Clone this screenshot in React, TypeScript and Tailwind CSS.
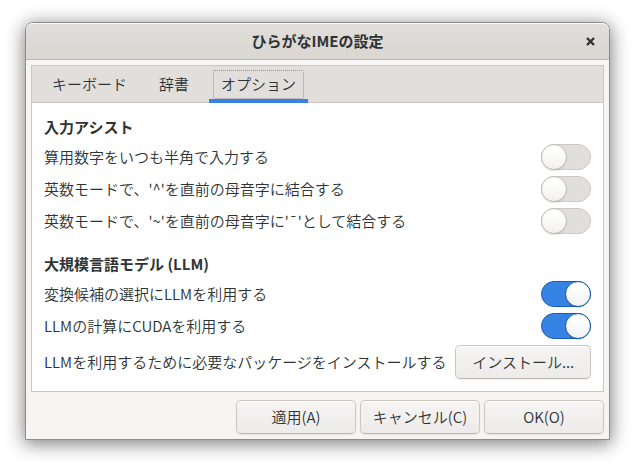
import { useState, type ReactNode } from "react";

const tabs = ["キーボード", "辞書", "オプション"];

function Switch({ id, defaultChecked }: { id: string; defaultChecked?: boolean }) {
  return (
    <input
      id={id}
      type="checkbox"
      role="switch"
      defaultChecked={defaultChecked}
      className="flex h-[26px] w-[50px] shrink-0 appearance-none rounded-full border border-[#cdc7c2] bg-[#e1dedb] before:-m-px before:size-[26px] before:rounded-full before:border before:border-[#c4bdb6] before:bg-linear-to-b before:from-white before:from-20% before:to-[#f2f1f0] before:shadow-[0_1px_1px_rgba(0,0,0,0.12)] before:content-[''] checked:justify-end checked:border-[#185fb4] checked:bg-[#3584e4] checked:before:border-[#185fb4]"
    />
  );
}

function SwitchRow({ id, label, on }: { id: string; label: string; on?: boolean }) {
  return (
    <div className="flex items-center justify-between">
      <label htmlFor={id} className="whitespace-nowrap">
        {label}
      </label>
      <Switch id={id} defaultChecked={on} />
    </div>
  );
}

function Button({ children, wide }: { children: ReactNode; wide?: boolean }) {
  return (
    <button
      type="button"
      className={`h-[34px] shrink-0 whitespace-nowrap rounded-[5px] border border-[#cdc7c2] border-b-[#bfb8b1] bg-linear-to-b from-[#f6f5f4] to-[#edebe9] shadow-[inset_0_1px_rgba(255,255,255,0.8),0_1px_2px_rgba(0,0,0,0.07)] ${wide ? "px-4" : "w-[120px]"}`}
    >
      {children}
    </button>
  );
}

export default function App() {
  const [active, setActive] = useState(2);
  return (
    <div className="bg-white px-[25px] pt-[22px] pb-7 font-['Noto_Sans_CJK_JP',sans-serif] text-[15px] leading-[22px] font-[350] text-[#2e3436]">
      <div className="rounded-t-lg border border-[#8c8c8b] bg-[#f6f5f4] shadow-[0_3px_18px_1px_rgba(0,0,0,0.5)]">
        <header className="grid h-[37px] grid-cols-[1fr_auto_1fr] items-center rounded-t-[7px] border-b border-[#bfb8b1] bg-linear-to-b from-[#e1dedb] to-[#dad6d2] shadow-[inset_0_1px_rgba(255,255,255,0.8)]">
          <h1 className="col-start-2 font-bold">ひらがなIMEの設定</h1>
          <button type="button" aria-label="閉じる" className="mr-[14px] justify-self-end">
            <svg viewBox="0 0 9 9" className="size-[9px]" fill="none" stroke="#2e3436" strokeWidth="2.4">
              <path d="M1 1 8 8M8 1 1 8" />
            </svg>
          </button>
        </header>

        <main className="flex flex-col gap-2 p-[5px]">
          <div className="border border-[#cdc7c2] bg-white">
            <div role="tablist" className="flex h-[37px] gap-2 bg-[#e1dedb] px-2 shadow-[inset_0_-1px_#cdc7c2]">
              {tabs.map((name, i) => (
                <button
                  key={name}
                  type="button"
                  role="tab"
                  aria-selected={i === active}
                  onClick={() => setActive(i)}
                  className={`border-b-4 px-1 pt-1 ${i === active ? "border-[#3584e4]" : "border-transparent"}`}
                >
                  <span
                    className={`flex h-[29px] items-center rounded-xs border border-dotted px-[7px] pb-0.5 ${i === active ? "border-[#969593]" : "border-transparent"}`}
                  >
                    {name}
                  </span>
                </button>
              ))}
            </div>

            <div role="tabpanel" className="flex flex-col gap-[6px] p-3">
              <h2 className="pt-px font-bold">入力アシスト</h2>
              <SwitchRow id="digits" label="算用数字をいつも半角で入力する" />
              <SwitchRow id="circumflex" label="英数モードで、'^'を直前の母音字に結合する" />
              <SwitchRow id="macron" label="英数モードで、'~'を直前の母音字に'¯'として結合する" />
              <h2 className="mt-3 pt-px font-bold">大規模言語モデル (LLM)</h2>
              <SwitchRow id="llm" label="変換候補の選択にLLMを利用する" on />
              <SwitchRow id="cuda" label="LLMの計算にCUDAを利用する" on />
              <div className="flex items-center justify-between">
                <span className="whitespace-nowrap">LLMを利用するために必要なパッケージをインストールする</span>
                <Button wide>インストール...</Button>
              </div>
            </div>
          </div>

          <footer className="flex justify-end gap-1">
            <Button>適用(A)</Button>
            <Button>キャンセル(C)</Button>
            <Button>OK(O)</Button>
          </footer>
        </main>
      </div>
    </div>
  );
}
